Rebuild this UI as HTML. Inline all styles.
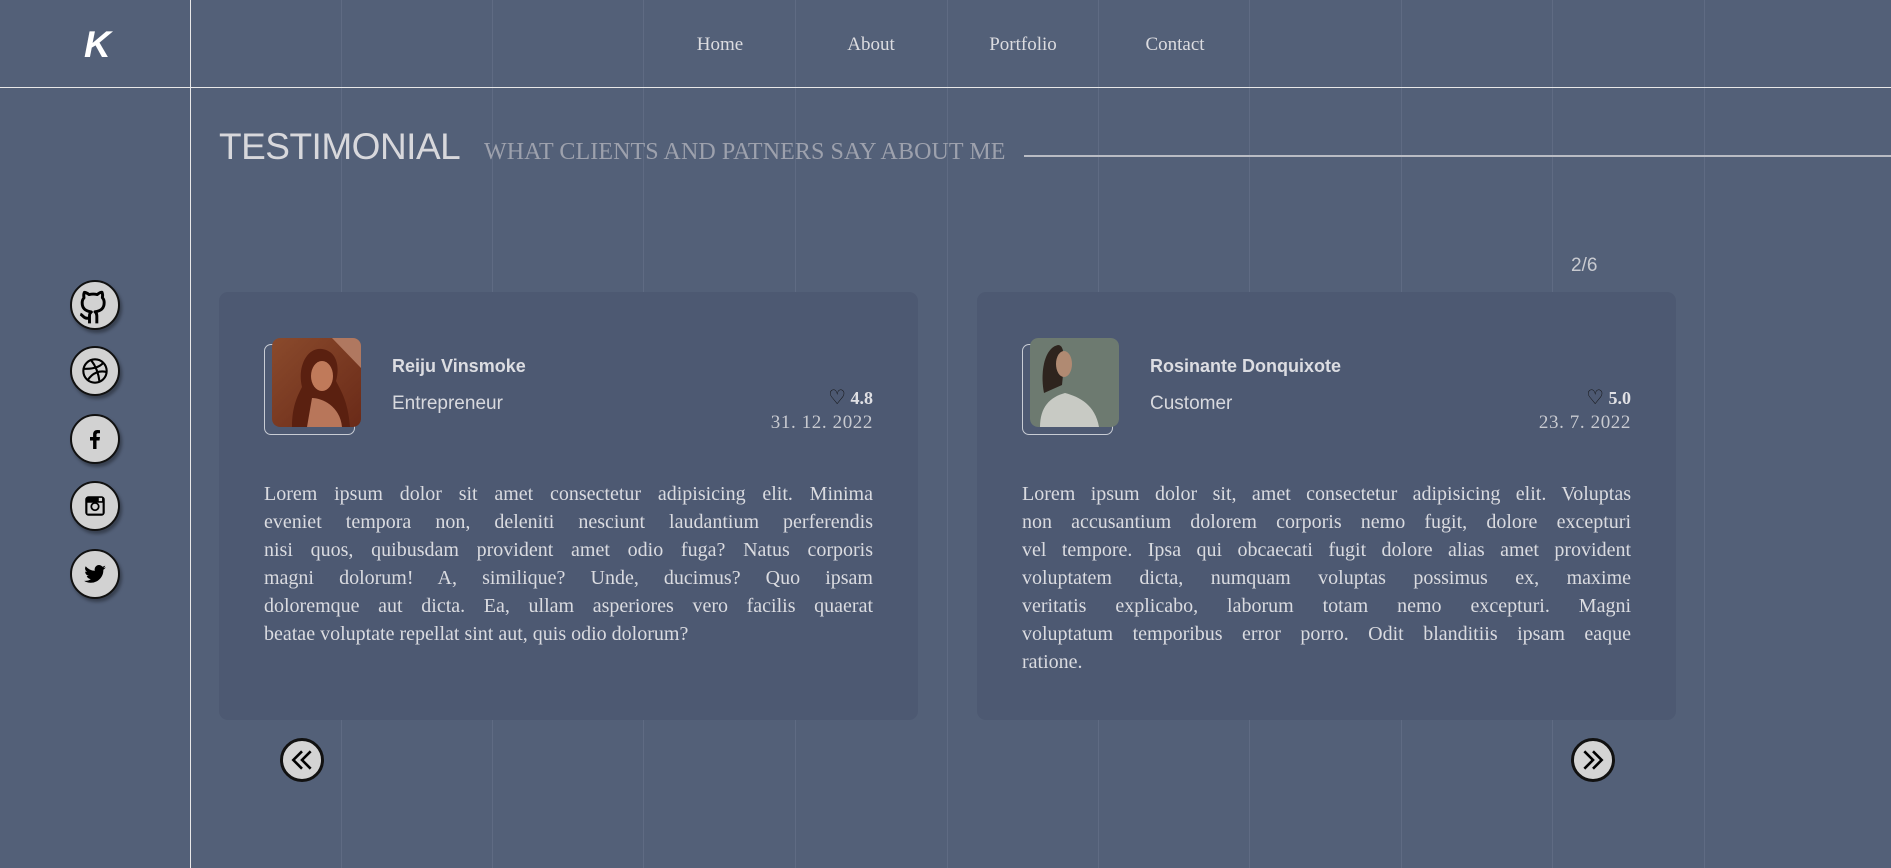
<!DOCTYPE html>
<html><head><meta charset="utf-8">
<style>
*{margin:0;padding:0;box-sizing:border-box}
body{width:1891px;height:868px;overflow:hidden;background:#536078;position:relative;font-family:"Liberation Serif",serif;}
.vl{position:absolute;top:0;width:1px;height:868px;background:#5f6b83}
.main{position:absolute;left:190px;top:0;width:1px;height:868px;background:#e8e8e8}
.hl{position:absolute;left:0;top:87px;width:1891px;height:1px;background:#e8e8e8}
.logo{position:absolute;left:84px;top:24px;font-family:"Liberation Sans",sans-serif;font-weight:bold;font-style:italic;font-size:37px;color:#fff}
.nav{position:absolute;top:34px;font-size:19px;color:#dcdce0;transform:translateX(-50%)}
.title{position:absolute;left:219px;top:126px;font-family:"Liberation Sans",sans-serif;font-size:37px;color:#d8d8dc;letter-spacing:-0.5px}
.sub{position:absolute;left:484px;top:139px;font-size:24px;color:#9da1ad;letter-spacing:0.1px}
.sline{position:absolute;left:1024px;top:155px;right:0;height:2px;background:#b9bcc4}
.pg{position:absolute;left:1571px;top:255px;font-family:"Liberation Sans",sans-serif;font-size:19px;color:#c8cad0}
.card{position:absolute;top:292px;width:699px;height:428px;background:#4d5972;border-radius:9px}
.frame{position:absolute;left:45px;top:52px;width:91px;height:91px;border:1.5px solid #c8ccd4;border-radius:7px}
.av{position:absolute;left:53px;top:46px;width:89px;height:89px;border-radius:8px}
.name{position:absolute;left:173px;top:64px;font-family:"Liberation Sans",sans-serif;font-weight:bold;font-size:18px;color:#dcdde2}
.role{position:absolute;left:173px;top:101px;font-family:"Liberation Sans",sans-serif;font-size:19px;color:#d8d9de}
.rate{position:absolute;right:45px;top:93px;font-size:18px;color:#e0e0e4;font-weight:bold;text-align:right}
.date{position:absolute;right:45px;top:120px;font-size:19px;color:#c8cad0;letter-spacing:0.6px}
.txt{position:absolute;left:45px;right:45px;top:188px;font-size:20px;line-height:28px;color:#dadbe0;letter-spacing:0}
.txt div{text-align:justify;text-align-last:justify;white-space:nowrap}
.txt div.l{text-align-last:left}
.soc{position:absolute;left:70px;width:50px;height:50px;border-radius:50%;background:#d2d2d2;border:2.5px solid #111;box-shadow:2px 3px 3px rgba(0,0,0,.35);display:flex;align-items:center;justify-content:center}
.arr{position:absolute;top:738px;width:44px;height:44px;border-radius:50%;background:#d4d4d4;border:3px solid #111;display:flex;align-items:center;justify-content:center}
</style></head><body>
<div class="vl" style="left:341px"></div><div class="vl" style="left:492px"></div><div class="vl" style="left:643px"></div><div class="vl" style="left:795px"></div><div class="vl" style="left:947px"></div><div class="vl" style="left:1098px"></div><div class="vl" style="left:1249px"></div><div class="vl" style="left:1401px"></div><div class="vl" style="left:1552px"></div><div class="vl" style="left:1704px"></div>
<div class="main"></div><div class="hl"></div>
<div class="logo">K</div>
<div class="nav" style="left:720px">Home</div>
<div class="nav" style="left:871px">About</div>
<div class="nav" style="left:1023px">Portfolio</div>
<div class="nav" style="left:1175px">Contact</div>
<div class="title">TESTIMONIAL</div>
<div class="sub">WHAT CLIENTS AND PATNERS SAY ABOUT ME</div>
<div class="sline"></div>
<div class="pg">2/6</div>

<div class="soc" style="top:280px"><svg width="44" height="44" viewBox="0 0 24 24" fill="none" stroke="#000" stroke-width="1.6" stroke-linejoin="round"><path d="M9 22v-4c0-1 .3-1.7 1-2.2-3-.4-5-1.7-5-5 0-1 .3-2 1-2.7-.2-.8-.2-2 .2-3 0 0 1 0 2.6 1.2a9 9 0 0 1 4.4 0C14.8 5 15.8 5 15.8 5c.4 1 .4 2.2.2 3 .7.7 1 1.7 1 2.7 0 3.3-2 4.6-5 5 .7.5 1 1.3 1 2.2V22"/><path d="M9 19c-3 1-3.5-1.5-5-2"/></svg></div>
<div class="soc" style="top:346px"><svg width="28" height="28" viewBox="0 0 24 24" fill="none" stroke="#000" stroke-width="1.8"><circle cx="12" cy="12" r="10"/><path d="M8.6 2.6c4 5 6.5 12 7.3 18.7M19.1 5c-3.5 4-9 5.5-17 5M21.9 12.9c-6-1.5-12 .5-16 6.8"/></svg></div>
<div class="soc" style="top:414px"><svg width="24" height="24" viewBox="0 0 24 24"><path d="M13.5 22v-8.5h3l.5-3.5h-3.5V8c0-1 .3-1.7 1.8-1.7H17V3.2c-.4 0-1.4-.2-2.6-.2-2.6 0-4.3 1.6-4.3 4.4V10H7v3.5h3.1V22z" fill="#000"/></svg></div>
<div class="soc" style="top:481px"><svg width="26" height="26" viewBox="0 0 24 24"><rect x="3" y="3" width="18" height="18" rx="3" fill="#000"/><rect x="5" y="9" width="14" height="10" fill="#d2d2d2"/><circle cx="12" cy="12.5" r="4.2" fill="#000"/><circle cx="12" cy="12.5" r="2.6" fill="#d2d2d2"/><rect x="15.5" y="4.5" width="3" height="3" fill="#d2d2d2"/></svg></div>
<div class="soc" style="top:549px"><svg width="26" height="26" viewBox="0 0 24 24"><path d="M22 5.9c-.7.3-1.5.5-2.3.6.8-.5 1.5-1.3 1.8-2.2-.8.5-1.7.8-2.6 1a4 4 0 0 0-7 3.7A11.5 11.5 0 0 1 3.4 4.8a4 4 0 0 0 1.3 5.4c-.7 0-1.300-.2-1.8-.5 0 2 1.4 3.6 3.3 4-.6.2-1.2.2-1.8.1.5 1.6 2 2.8 3.8 2.8A8.2 8.2 0 0 1 2 18.3 11.5 11.5 0 0 0 19.7 8.6v-.5c.9-.6 1.7-1.4 2.3-2.2z" fill="#000"/></svg></div>

<div class="card" style="left:219px">
<div class="frame"></div>
<svg class="av" viewBox="0 0 89 89"><defs><linearGradient id="g1" x1="0" y1="0" x2="1" y2="1"><stop offset="0" stop-color="#8a4a2c"/><stop offset="1" stop-color="#6a2a18"/></linearGradient></defs><rect width="89" height="89" rx="8" fill="url(#g1)"/><path d="M60 0h29v30z" fill="#b07860"/><path d="M20 89c0-20 5-30 10-40-5-20 5-40 20-38 15 2 18 18 14 32 5 10 12 20 14 46z" fill="#5a2010"/><ellipse cx="50" cy="38" rx="11" ry="15" fill="#c07a5a"/><path d="M40 60c10 0 28 8 30 29H35z" fill="#b8765a"/></svg>
<div class="name">Reiju Vinsmoke</div>
<div class="role">Entrepreneur</div>
<div class="rate"><span style="font-weight:normal;font-family:'DejaVu Sans',sans-serif;font-size:20px;color:#111">♡</span> 4.8</div>
<div class="date">31. 12. 2022</div>
<div class="txt">
<div>Lorem ipsum dolor sit amet consectetur adipisicing elit. Minima</div>
<div>eveniet tempora non, deleniti nesciunt laudantium perferendis</div>
<div>nisi quos, quibusdam provident amet odio fuga? Natus corporis</div>
<div>magni dolorum! A, similique? Unde, ducimus? Quo ipsam</div>
<div>doloremque aut dicta. Ea, ullam asperiores vero facilis quaerat</div>
<div class="l">beatae voluptate repellat sint aut, quis odio dolorum?</div>
</div></div>

<div class="card" style="left:977px">
<div class="frame"></div>
<svg class="av" viewBox="0 0 89 89"><rect width="89" height="89" rx="8" fill="#6d7a70"/><path d="M10 89c0-20 10-30 25-34 15 4 30 12 34 34z" fill="#c8cac4"/><path d="M14 55c-4-20 0-45 14-48 8 0 6 20 4 40z" fill="#2e241e"/><ellipse cx="34" cy="26" rx="8" ry="13" fill="#b08a72"/></svg>
<div class="name">Rosinante Donquixote</div>
<div class="role">Customer</div>
<div class="rate"><span style="font-weight:normal;font-family:'DejaVu Sans',sans-serif;font-size:20px;color:#111">♡</span> 5.0</div>
<div class="date">23. 7. 2022</div>
<div class="txt">
<div>Lorem ipsum dolor sit, amet consectetur adipisicing elit. Voluptas</div>
<div>non accusantium dolorem corporis nemo fugit, dolore excepturi</div>
<div>vel tempore. Ipsa qui obcaecati fugit dolore alias amet provident</div>
<div>voluptatem dicta, numquam voluptas possimus ex, maxime</div>
<div>veritatis explicabo, laborum totam nemo excepturi. Magni</div>
<div>voluptatum temporibus error porro. Odit blanditiis ipsam eaque</div>
<div class="l">ratione.</div>
</div></div>

<div class="arr" style="left:280px"><svg width="26" height="26" viewBox="0 0 24 24" fill="none" stroke="#000" stroke-width="2.4"><path d="M12 4l-8 8 8 8M20 4l-8 8 8 8"/></svg></div>
<div class="arr" style="left:1571px"><svg width="26" height="26" viewBox="0 0 24 24" fill="none" stroke="#000" stroke-width="2.4"><path d="M4 4l8 8-8 8M12 4l8 8-8 8"/></svg></div>
</body></html>
